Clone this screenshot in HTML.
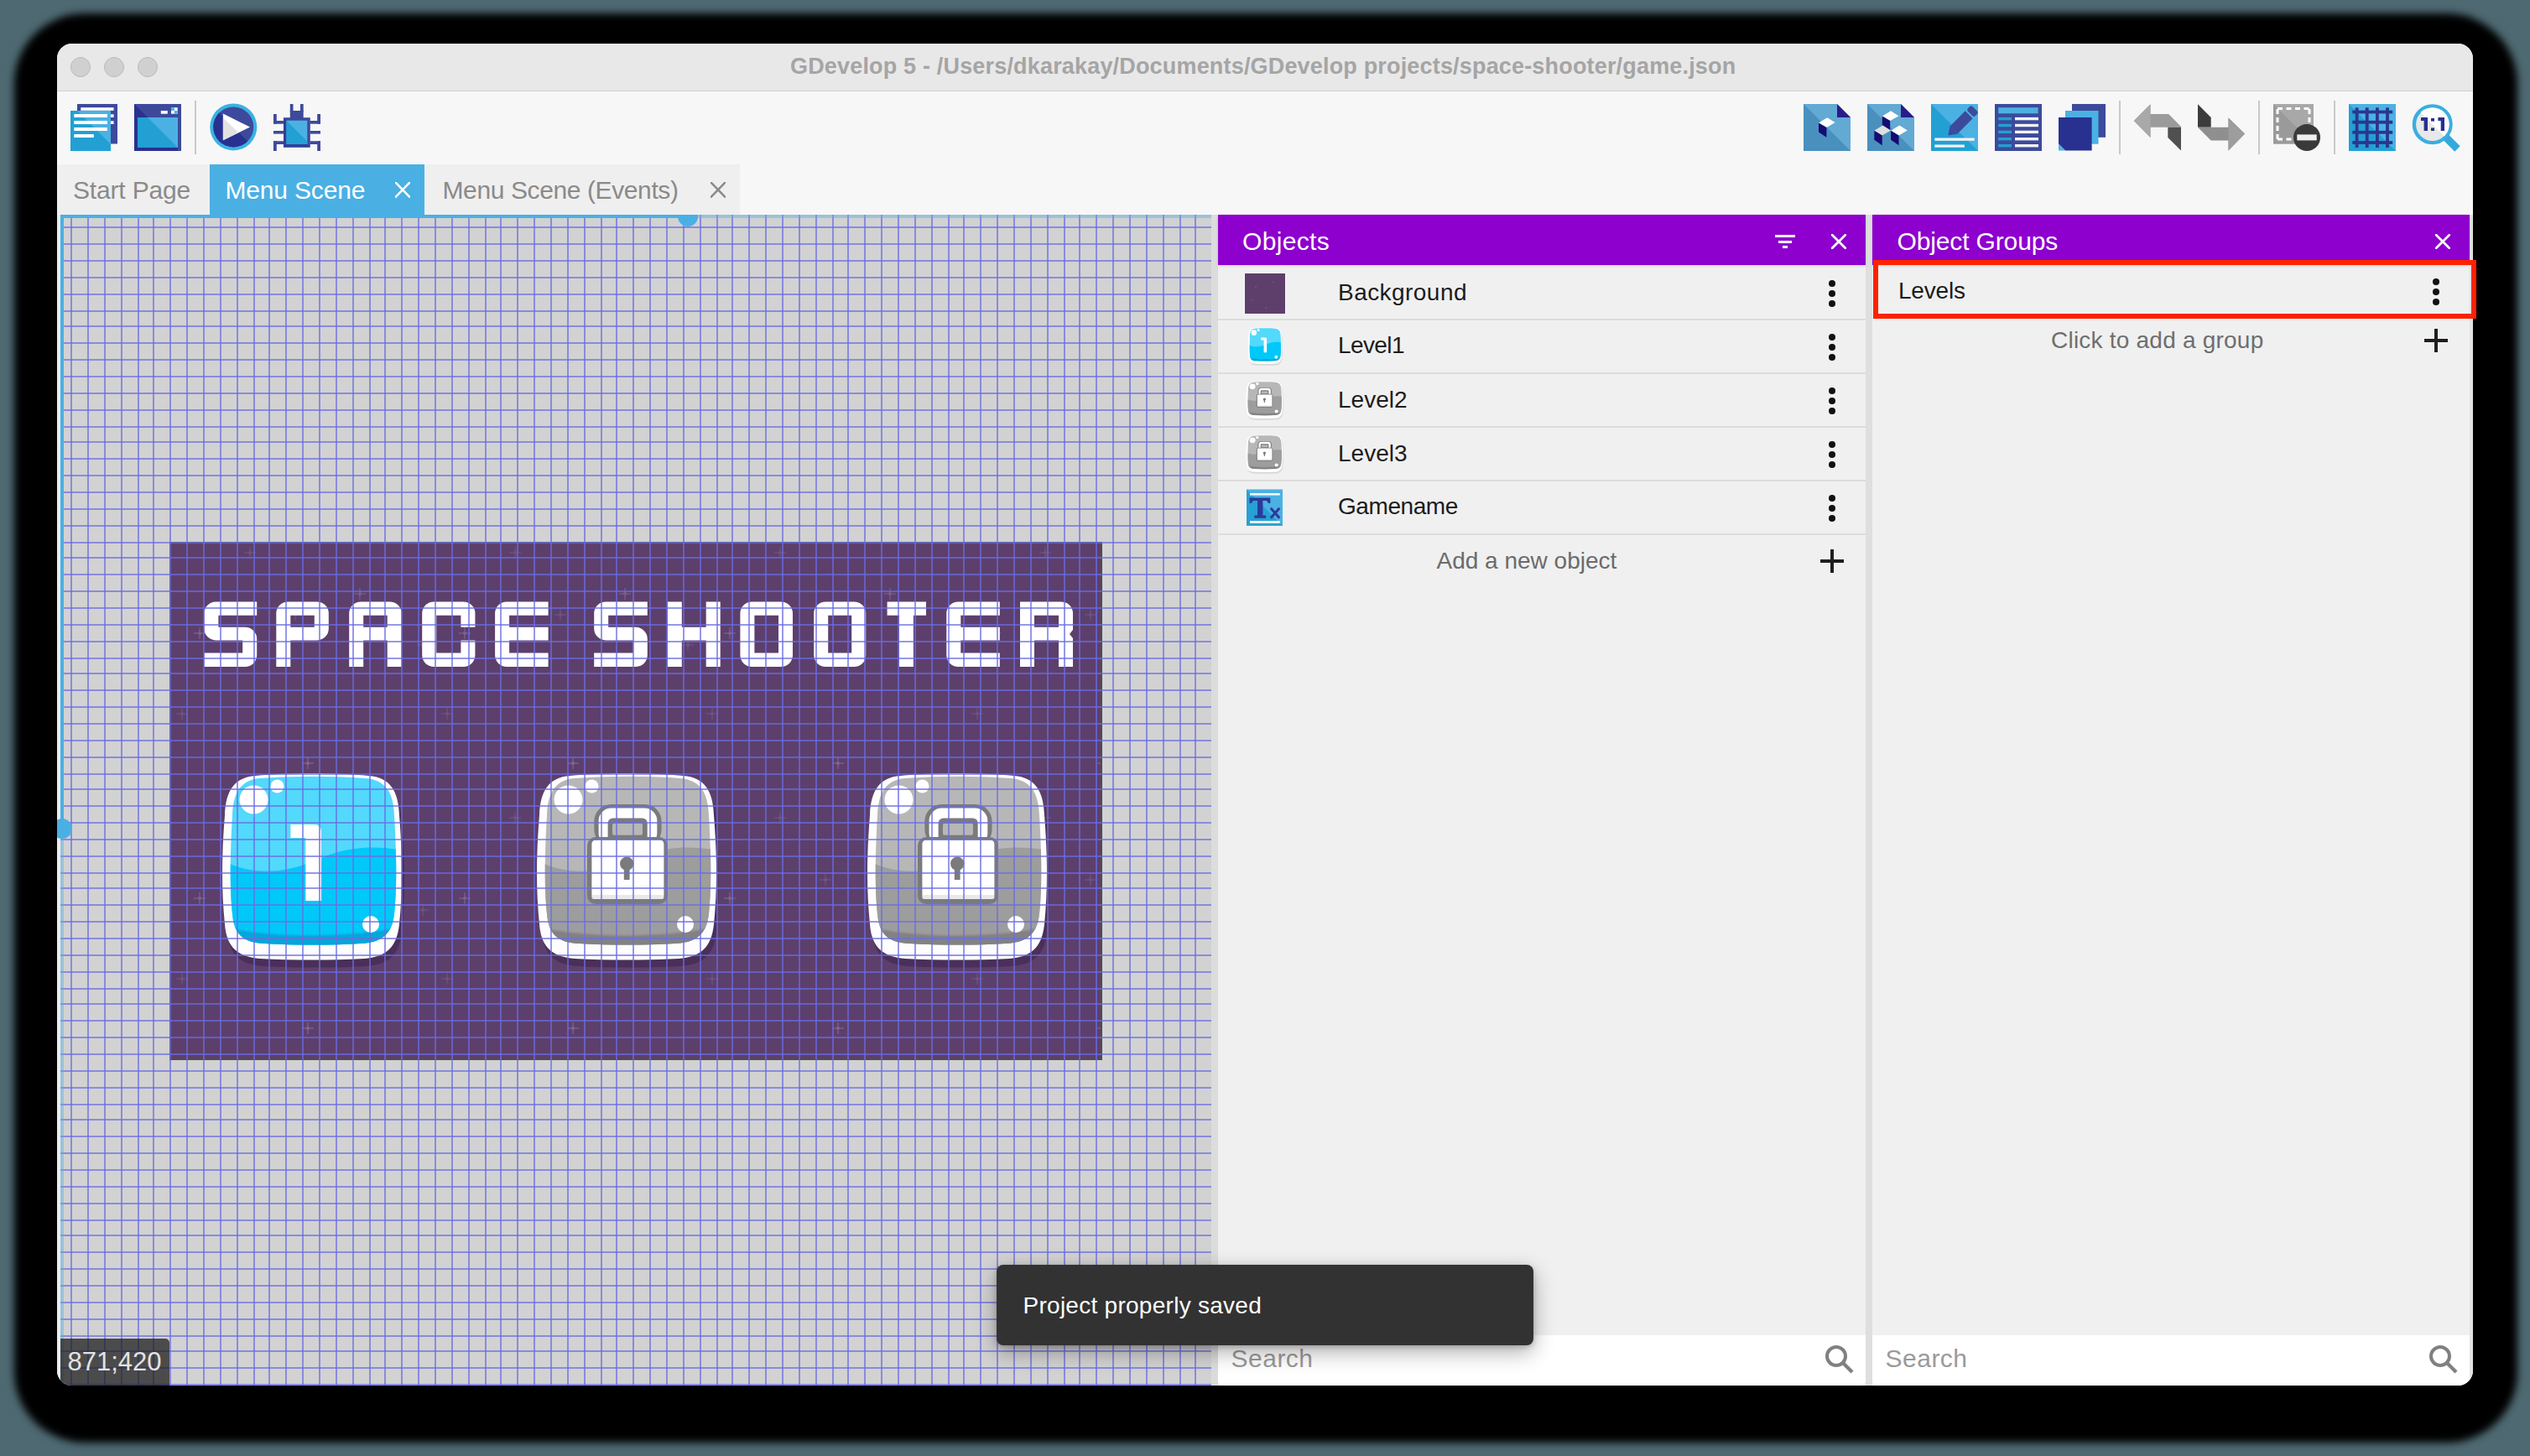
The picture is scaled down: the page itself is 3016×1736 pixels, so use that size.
<!DOCTYPE html>
<html><head><meta charset="utf-8">
<style>
*{box-sizing:border-box;margin:0;padding:0}
html,body{width:3016px;height:1736px;overflow:hidden;background:#4e6972;font-family:"Liberation Sans", sans-serif}
.abs{position:absolute}
</style></head><body>

<div class="abs" style="left:17px;top:16px;width:2984px;height:1704px;border-radius:84px;background:#000;filter:blur(5px)"></div>
<div class="abs" style="left:68px;top:52px;width:2880px;height:1600px;border-radius:18px;overflow:hidden;background:#f7f7f7">
<div class="abs" style="left:-68px;top:-52px;width:3016px;height:1736px">
<div class="abs" style="left:68px;top:52px;width:2880px;height:57px;background:#e8e8e8;border-bottom:1px solid #d0d0d0"></div>
<div class="abs" style="left:84px;top:68px;width:24px;height:24px;border-radius:50%;background:#d0d0d0;border:1px solid #b9b9b9"></div>
<div class="abs" style="left:124px;top:68px;width:24px;height:24px;border-radius:50%;background:#d0d0d0;border:1px solid #b9b9b9"></div>
<div class="abs" style="left:164px;top:68px;width:24px;height:24px;border-radius:50%;background:#d0d0d0;border:1px solid #b9b9b9"></div>
<div style="position:absolute;left:942.0px;top:65.6px;font-size:27px;line-height:27px;color:#a5a5a5;font-weight:bold;white-space:nowrap;letter-spacing:0.175px">GDevelop 5 - /Users/dkarakay/Documents/GDevelop projects/space-shooter/game.json</div>
<div class="abs" style="left:68px;top:196px;width:182px;height:60px;background:#efefef"></div>
<div class="abs" style="left:250px;top:196px;width:256px;height:60px;background:#4ab0e4"></div>
<div class="abs" style="left:506px;top:196px;width:376px;height:60px;background:#efefef"></div>
<div style="position:absolute;left:87.0px;top:212.4px;font-size:30px;line-height:30px;color:#8a8a8a;font-weight:normal;white-space:nowrap;letter-spacing:-0.17px">Start Page</div>
<div style="position:absolute;left:268.5px;top:212.4px;font-size:30px;line-height:30px;color:#ffffff;font-weight:normal;white-space:nowrap;letter-spacing:-0.17px">Menu Scene</div>
<div style="position:absolute;left:527.5px;top:212.4px;font-size:30px;line-height:30px;color:#8a8a8a;font-weight:normal;white-space:nowrap;letter-spacing:-0.39px">Menu Scene (Events)</div>
<svg class="abs" style="left:471px;top:217px" width="18" height="18.5" viewBox="0 0 18 18.5"><path d="M0 0L18 18.5M18 0L0 18.5" stroke="#ffffff" stroke-width="2.6"/></svg>
<svg class="abs" style="left:847px;top:217px" width="18" height="18.5" viewBox="0 0 18 18.5"><path d="M0 0L18 18.5M18 0L0 18.5" stroke="#8a8a8a" stroke-width="2.6"/></svg>
<div class="abs" style="left:68px;top:256px;width:4px;height:1396px;background:#ececec"></div>
<div class="abs" style="left:72px;top:256px;width:1372px;height:1396px;background:#d2d2d2;overflow:hidden">
<div class="abs" style="left:-72px;top:-256px;width:3016px;height:1736px">
<svg class="abs" style="left:0;top:0" width="3016" height="1736" viewBox="0 0 3016 1736"><rect x="203" y="647" width="1110" height="616" fill="#5d3f6c" stroke="#4e4e4e" stroke-width="2"/><clipPath id="pr"><rect x="204" y="648" width="1108" height="614"/></clipPath><g clip-path="url(#pr)"><g opacity="0.55" fill="#9a86b0"><circle cx="367" cy="910" r="2"/><rect x="360" y="909.4" width="14" height="1.2"/><rect x="366.4" y="903" width="1.2" height="14"/></g><g opacity="0.50" fill="#9a86b0"><circle cx="238" cy="755" r="2"/><rect x="231" y="754.4" width="14" height="1.2"/><rect x="237.4" y="748" width="1.2" height="14"/></g><g opacity="0.28" fill="#9a86b0"><circle cx="217" cy="851" r="2"/><rect x="210" y="850.4" width="14" height="1.2"/><rect x="216.4" y="844" width="1.2" height="14"/></g><g opacity="0.28" fill="#9a86b0"><circle cx="298" cy="659" r="2"/><rect x="291" y="658.4" width="14" height="1.2"/><rect x="297.4" y="652" width="1.2" height="14"/></g><g opacity="0.28" fill="#9a86b0"><circle cx="504" cy="769" r="2"/><rect x="497" y="768.4" width="14" height="1.2"/><rect x="503.4" y="762" width="1.2" height="14"/></g><g opacity="0.44" fill="#9a86b0"><circle cx="429" cy="708" r="2"/><rect x="422" y="707.4" width="14" height="1.2"/><rect x="428.4" y="701" width="1.2" height="14"/></g><g opacity="0.28" fill="#9a86b0"><circle cx="352" cy="733" r="2"/><rect x="345" y="732.4" width="14" height="1.2"/><rect x="351.4" y="726" width="1.2" height="14"/></g><g opacity="0.55" fill="#9a86b0"><circle cx="683" cy="910" r="2"/><rect x="676" y="909.4" width="14" height="1.2"/><rect x="682.4" y="903" width="1.2" height="14"/></g><g opacity="0.50" fill="#9a86b0"><circle cx="554" cy="755" r="2"/><rect x="547" y="754.4" width="14" height="1.2"/><rect x="553.4" y="748" width="1.2" height="14"/></g><g opacity="0.28" fill="#9a86b0"><circle cx="533" cy="851" r="2"/><rect x="526" y="850.4" width="14" height="1.2"/><rect x="532.4" y="844" width="1.2" height="14"/></g><g opacity="0.28" fill="#9a86b0"><circle cx="614" cy="659" r="2"/><rect x="607" y="658.4" width="14" height="1.2"/><rect x="613.4" y="652" width="1.2" height="14"/></g><g opacity="0.28" fill="#9a86b0"><circle cx="820" cy="769" r="2"/><rect x="813" y="768.4" width="14" height="1.2"/><rect x="819.4" y="762" width="1.2" height="14"/></g><g opacity="0.44" fill="#9a86b0"><circle cx="745" cy="708" r="2"/><rect x="738" y="707.4" width="14" height="1.2"/><rect x="744.4" y="701" width="1.2" height="14"/></g><g opacity="0.28" fill="#9a86b0"><circle cx="668" cy="733" r="2"/><rect x="661" y="732.4" width="14" height="1.2"/><rect x="667.4" y="726" width="1.2" height="14"/></g><g opacity="0.55" fill="#9a86b0"><circle cx="999" cy="910" r="2"/><rect x="992" y="909.4" width="14" height="1.2"/><rect x="998.4" y="903" width="1.2" height="14"/></g><g opacity="0.50" fill="#9a86b0"><circle cx="870" cy="755" r="2"/><rect x="863" y="754.4" width="14" height="1.2"/><rect x="869.4" y="748" width="1.2" height="14"/></g><g opacity="0.28" fill="#9a86b0"><circle cx="849" cy="851" r="2"/><rect x="842" y="850.4" width="14" height="1.2"/><rect x="848.4" y="844" width="1.2" height="14"/></g><g opacity="0.28" fill="#9a86b0"><circle cx="930" cy="659" r="2"/><rect x="923" y="658.4" width="14" height="1.2"/><rect x="929.4" y="652" width="1.2" height="14"/></g><g opacity="0.28" fill="#9a86b0"><circle cx="1136" cy="769" r="2"/><rect x="1129" y="768.4" width="14" height="1.2"/><rect x="1135.4" y="762" width="1.2" height="14"/></g><g opacity="0.44" fill="#9a86b0"><circle cx="1061" cy="708" r="2"/><rect x="1054" y="707.4" width="14" height="1.2"/><rect x="1060.4" y="701" width="1.2" height="14"/></g><g opacity="0.28" fill="#9a86b0"><circle cx="984" cy="733" r="2"/><rect x="977" y="732.4" width="14" height="1.2"/><rect x="983.4" y="726" width="1.2" height="14"/></g><g opacity="0.55" fill="#9a86b0"><circle cx="1315" cy="910" r="2"/><rect x="1308" y="909.4" width="14" height="1.2"/><rect x="1314.4" y="903" width="1.2" height="14"/></g><g opacity="0.50" fill="#9a86b0"><circle cx="1186" cy="755" r="2"/><rect x="1179" y="754.4" width="14" height="1.2"/><rect x="1185.4" y="748" width="1.2" height="14"/></g><g opacity="0.28" fill="#9a86b0"><circle cx="1165" cy="851" r="2"/><rect x="1158" y="850.4" width="14" height="1.2"/><rect x="1164.4" y="844" width="1.2" height="14"/></g><g opacity="0.28" fill="#9a86b0"><circle cx="1246" cy="659" r="2"/><rect x="1239" y="658.4" width="14" height="1.2"/><rect x="1245.4" y="652" width="1.2" height="14"/></g><g opacity="0.28" fill="#9a86b0"><circle cx="1300" cy="733" r="2"/><rect x="1293" y="732.4" width="14" height="1.2"/><rect x="1299.4" y="726" width="1.2" height="14"/></g><g opacity="0.55" fill="#9a86b0"><circle cx="367" cy="1226" r="2"/><rect x="360" y="1225.4" width="14" height="1.2"/><rect x="366.4" y="1219" width="1.2" height="14"/></g><g opacity="0.50" fill="#9a86b0"><circle cx="238" cy="1071" r="2"/><rect x="231" y="1070.4" width="14" height="1.2"/><rect x="237.4" y="1064" width="1.2" height="14"/></g><g opacity="0.28" fill="#9a86b0"><circle cx="217" cy="1167" r="2"/><rect x="210" y="1166.4" width="14" height="1.2"/><rect x="216.4" y="1160" width="1.2" height="14"/></g><g opacity="0.28" fill="#9a86b0"><circle cx="298" cy="975" r="2"/><rect x="291" y="974.4" width="14" height="1.2"/><rect x="297.4" y="968" width="1.2" height="14"/></g><g opacity="0.28" fill="#9a86b0"><circle cx="504" cy="1085" r="2"/><rect x="497" y="1084.4" width="14" height="1.2"/><rect x="503.4" y="1078" width="1.2" height="14"/></g><g opacity="0.44" fill="#9a86b0"><circle cx="429" cy="1024" r="2"/><rect x="422" y="1023.4" width="14" height="1.2"/><rect x="428.4" y="1017" width="1.2" height="14"/></g><g opacity="0.28" fill="#9a86b0"><circle cx="352" cy="1049" r="2"/><rect x="345" y="1048.4" width="14" height="1.2"/><rect x="351.4" y="1042" width="1.2" height="14"/></g><g opacity="0.55" fill="#9a86b0"><circle cx="683" cy="1226" r="2"/><rect x="676" y="1225.4" width="14" height="1.2"/><rect x="682.4" y="1219" width="1.2" height="14"/></g><g opacity="0.50" fill="#9a86b0"><circle cx="554" cy="1071" r="2"/><rect x="547" y="1070.4" width="14" height="1.2"/><rect x="553.4" y="1064" width="1.2" height="14"/></g><g opacity="0.28" fill="#9a86b0"><circle cx="533" cy="1167" r="2"/><rect x="526" y="1166.4" width="14" height="1.2"/><rect x="532.4" y="1160" width="1.2" height="14"/></g><g opacity="0.28" fill="#9a86b0"><circle cx="614" cy="975" r="2"/><rect x="607" y="974.4" width="14" height="1.2"/><rect x="613.4" y="968" width="1.2" height="14"/></g><g opacity="0.28" fill="#9a86b0"><circle cx="820" cy="1085" r="2"/><rect x="813" y="1084.4" width="14" height="1.2"/><rect x="819.4" y="1078" width="1.2" height="14"/></g><g opacity="0.44" fill="#9a86b0"><circle cx="745" cy="1024" r="2"/><rect x="738" y="1023.4" width="14" height="1.2"/><rect x="744.4" y="1017" width="1.2" height="14"/></g><g opacity="0.28" fill="#9a86b0"><circle cx="668" cy="1049" r="2"/><rect x="661" y="1048.4" width="14" height="1.2"/><rect x="667.4" y="1042" width="1.2" height="14"/></g><g opacity="0.55" fill="#9a86b0"><circle cx="999" cy="1226" r="2"/><rect x="992" y="1225.4" width="14" height="1.2"/><rect x="998.4" y="1219" width="1.2" height="14"/></g><g opacity="0.50" fill="#9a86b0"><circle cx="870" cy="1071" r="2"/><rect x="863" y="1070.4" width="14" height="1.2"/><rect x="869.4" y="1064" width="1.2" height="14"/></g><g opacity="0.28" fill="#9a86b0"><circle cx="849" cy="1167" r="2"/><rect x="842" y="1166.4" width="14" height="1.2"/><rect x="848.4" y="1160" width="1.2" height="14"/></g><g opacity="0.28" fill="#9a86b0"><circle cx="930" cy="975" r="2"/><rect x="923" y="974.4" width="14" height="1.2"/><rect x="929.4" y="968" width="1.2" height="14"/></g><g opacity="0.28" fill="#9a86b0"><circle cx="1136" cy="1085" r="2"/><rect x="1129" y="1084.4" width="14" height="1.2"/><rect x="1135.4" y="1078" width="1.2" height="14"/></g><g opacity="0.44" fill="#9a86b0"><circle cx="1061" cy="1024" r="2"/><rect x="1054" y="1023.4" width="14" height="1.2"/><rect x="1060.4" y="1017" width="1.2" height="14"/></g><g opacity="0.28" fill="#9a86b0"><circle cx="984" cy="1049" r="2"/><rect x="977" y="1048.4" width="14" height="1.2"/><rect x="983.4" y="1042" width="1.2" height="14"/></g><g opacity="0.55" fill="#9a86b0"><circle cx="1315" cy="1226" r="2"/><rect x="1308" y="1225.4" width="14" height="1.2"/><rect x="1314.4" y="1219" width="1.2" height="14"/></g><g opacity="0.50" fill="#9a86b0"><circle cx="1186" cy="1071" r="2"/><rect x="1179" y="1070.4" width="14" height="1.2"/><rect x="1185.4" y="1064" width="1.2" height="14"/></g><g opacity="0.28" fill="#9a86b0"><circle cx="1165" cy="1167" r="2"/><rect x="1158" y="1166.4" width="14" height="1.2"/><rect x="1164.4" y="1160" width="1.2" height="14"/></g><g opacity="0.28" fill="#9a86b0"><circle cx="1246" cy="975" r="2"/><rect x="1239" y="974.4" width="14" height="1.2"/><rect x="1245.4" y="968" width="1.2" height="14"/></g><g opacity="0.28" fill="#9a86b0"><circle cx="1300" cy="1049" r="2"/><rect x="1293" y="1048.4" width="14" height="1.2"/><rect x="1299.4" y="1042" width="1.2" height="14"/></g></g><path d="M257.4 717.4H306.2V733.8H260.4V747.8H292.2A14.0 14.0 0 0 1 306.2 761.8V781.0A14.0 14.0 0 0 1 292.2 795.0H243.4V778.5H289.2V763.4H257.4A14.0 14.0 0 0 1 243.4 749.4V731.4A14.0 14.0 0 0 1 257.4 717.4ZM343.3 717.4H377.8A14.0 14.0 0 0 1 391.8 731.4V749.4A14.0 14.0 0 0 1 377.8 763.4H346.3V795.0H329.3V731.4A14.0 14.0 0 0 1 343.3 717.4ZM346.3 733.8V747.8H374.8V733.8ZM430.2 717.4H464.7A14.0 14.0 0 0 1 478.7 731.4V795.0H461.7V763.4H433.2V795.0H416.2V731.4A14.0 14.0 0 0 1 430.2 717.4ZM433.2 733.8V747.8H461.7V733.8ZM517.2 717.4H552.4A14.0 14.0 0 0 1 566.4 731.4V747.8H549.4V733.8H520.2V778.5H549.4V763.4H566.4V781.0A14.0 14.0 0 0 1 552.4 795.0H517.2A14.0 14.0 0 0 1 503.2 781.0V731.4A14.0 14.0 0 0 1 517.2 717.4ZM604.1 717.4H653.6V733.8H607.1V747.8H653.6V763.4H607.1V778.5H653.6V795.0H604.1A14.0 14.0 0 0 1 590.1 781.0V731.4A14.0 14.0 0 0 1 604.1 717.4ZM722.2 717.4H771.8V733.8H725.2V747.8H757.8A14.0 14.0 0 0 1 771.8 761.8V781.0A14.0 14.0 0 0 1 757.8 795.0H708.2V778.5H754.8V763.4H722.2A14.0 14.0 0 0 1 708.2 749.4V731.4A14.0 14.0 0 0 1 722.2 717.4ZM795.8 717.4H812.8V747.8H841.7V717.4H858.7V795.0H841.7V763.4H812.8V795.0H795.8ZM896.4 717.4H931.0A14.0 14.0 0 0 1 945.0 731.4V781.0A14.0 14.0 0 0 1 931.0 795.0H896.4A14.0 14.0 0 0 1 882.4 781.0V731.4A14.0 14.0 0 0 1 896.4 717.4ZM899.4 733.8V778.5H928.0V733.8ZM984.2 717.4H1018.2A14.0 14.0 0 0 1 1032.2 731.4V781.0A14.0 14.0 0 0 1 1018.2 795.0H984.2A14.0 14.0 0 0 1 970.2 781.0V731.4A14.0 14.0 0 0 1 984.2 717.4ZM987.2 733.8V778.5H1015.2V733.8ZM1057.6 717.4H1104.0V733.8H1088.9V795.0H1071.9V733.8H1057.6ZM1142.3 717.4H1191.8V733.8H1145.3V747.8H1191.8V763.4H1145.3V778.5H1191.8V795.0H1142.3A14.0 14.0 0 0 1 1128.3 781.0V731.4A14.0 14.0 0 0 1 1142.3 717.4ZM1216.0 717.4H1265.0A14.0 14.0 0 0 1 1279.0 731.4V751.0L1275.0 756.0L1279.0 761.0V795.0H1262.0V763.4H1233.0V795.0H1216.0ZM1233.0 733.8V747.8H1262.0V733.8Z" fill="#ffffff" fill-rule="evenodd"/><g transform="translate(264 922)"><path d="M40 3C80 -1 136 -1 176 3C200 5 211 20 212 50C216 100 216 140 212 180C209 208 196 219 170 221C130 223 86 223 46 221C20 219 6 208 4 180C0 140 0 100 4 50C5 20 16 5 40 3Z" transform="translate(3 9)" fill="rgba(35,15,50,0.32)"/><path d="M40 3C80 -1 136 -1 176 3C200 5 211 20 212 50C216 100 216 140 212 180C209 208 196 219 170 221C130 223 86 223 46 221C20 219 6 208 4 180C0 140 0 100 4 50C5 20 16 5 40 3Z" fill="#fdfdfd"/><clipPath id="cl264"><path d="M45 6C90 3 130 3 172 6C195 8 205 22 206 50C209 100 209 140 206 168C203 193 190 202 165 203C130 205 90 205 52 203C27 202 15 193 13 168C10 140 10 100 13 50C14 22 24 8 45 6Z"/></clipPath><g clip-path="url(#cl264)"><rect x="0" y="0" width="216" height="222" fill="#52d9fc"/><path d="M0 103C30 120 70 122 112 104C150 86 185 86 216 92V230H0Z" fill="#00c8f8"/><path d="M0 180C40 196 176 196 216 180V230H0Z" fill="#03a6d8"/><path d="M0 172C40 188 176 188 216 172V182C176 198 40 198 0 182Z" fill="#00c8f8" opacity="0.6"/></g><circle cx="38.5" cy="31.5" r="17" fill="#fff"/><circle cx="66.5" cy="15.5" r="8" fill="#fff"/><circle cx="178" cy="180" r="10" fill="#fff"/><path d="M82.4 61H111A8 8 0 0 1 119 69V152H100.3V77H82.4Z" fill="#fff"/></g><g transform="translate(639 922)"><path d="M40 3C80 -1 136 -1 176 3C200 5 211 20 212 50C216 100 216 140 212 180C209 208 196 219 170 221C130 223 86 223 46 221C20 219 6 208 4 180C0 140 0 100 4 50C5 20 16 5 40 3Z" transform="translate(3 9)" fill="rgba(35,15,50,0.32)"/><path d="M40 3C80 -1 136 -1 176 3C200 5 211 20 212 50C216 100 216 140 212 180C209 208 196 219 170 221C130 223 86 223 46 221C20 219 6 208 4 180C0 140 0 100 4 50C5 20 16 5 40 3Z" fill="#fdfdfd"/><clipPath id="cl639"><path d="M45 6C90 3 130 3 172 6C195 8 205 22 206 50C209 100 209 140 206 168C203 193 190 202 165 203C130 205 90 205 52 203C27 202 15 193 13 168C10 140 10 100 13 50C14 22 24 8 45 6Z"/></clipPath><g clip-path="url(#cl639)"><rect x="0" y="0" width="216" height="222" fill="#b7b7b7"/><path d="M0 103C30 120 70 122 112 104C150 86 185 86 216 92V230H0Z" fill="#9d9d9d"/><path d="M0 180C40 196 176 196 216 180V230H0Z" fill="#828282"/><path d="M0 172C40 188 176 188 216 172V182C176 198 40 198 0 182Z" fill="#9d9d9d" opacity="0.6"/></g><circle cx="38.5" cy="31.5" r="17" fill="#fff"/><circle cx="66.5" cy="15.5" r="8" fill="#fff"/><circle cx="178" cy="180" r="10" fill="#fff"/><rect x="69.3" y="37.1" width="80.3" height="50" rx="20" fill="#7b7b7b"/><rect x="74.6" y="41.5" width="69.7" height="45" rx="15" fill="#fff"/><rect x="85.6" y="53.5" width="47.1" height="34" rx="6" fill="#7b7b7b"/><rect x="91" y="59.7" width="36" height="14" rx="2" fill="#b7b7b7"/><rect x="61" y="76" width="95.8" height="79.9" rx="10" fill="#7b7b7b"/><rect x="66.4" y="79.4" width="86" height="70.6" rx="5" fill="#fff"/><rect x="66.4" y="145" width="86" height="5" rx="2.5" fill="#e9e9e9"/><circle cx="108.2" cy="107.8" r="8.2" fill="#7b7b7b"/><rect x="104.8" y="108" width="6.8" height="19" fill="#7b7b7b"/></g><g transform="translate(1033 922)"><path d="M40 3C80 -1 136 -1 176 3C200 5 211 20 212 50C216 100 216 140 212 180C209 208 196 219 170 221C130 223 86 223 46 221C20 219 6 208 4 180C0 140 0 100 4 50C5 20 16 5 40 3Z" transform="translate(3 9)" fill="rgba(35,15,50,0.32)"/><path d="M40 3C80 -1 136 -1 176 3C200 5 211 20 212 50C216 100 216 140 212 180C209 208 196 219 170 221C130 223 86 223 46 221C20 219 6 208 4 180C0 140 0 100 4 50C5 20 16 5 40 3Z" fill="#fdfdfd"/><clipPath id="cl1033"><path d="M45 6C90 3 130 3 172 6C195 8 205 22 206 50C209 100 209 140 206 168C203 193 190 202 165 203C130 205 90 205 52 203C27 202 15 193 13 168C10 140 10 100 13 50C14 22 24 8 45 6Z"/></clipPath><g clip-path="url(#cl1033)"><rect x="0" y="0" width="216" height="222" fill="#b7b7b7"/><path d="M0 103C30 120 70 122 112 104C150 86 185 86 216 92V230H0Z" fill="#9d9d9d"/><path d="M0 180C40 196 176 196 216 180V230H0Z" fill="#828282"/><path d="M0 172C40 188 176 188 216 172V182C176 198 40 198 0 182Z" fill="#9d9d9d" opacity="0.6"/></g><circle cx="38.5" cy="31.5" r="17" fill="#fff"/><circle cx="66.5" cy="15.5" r="8" fill="#fff"/><circle cx="178" cy="180" r="10" fill="#fff"/><rect x="69.3" y="37.1" width="80.3" height="50" rx="20" fill="#7b7b7b"/><rect x="74.6" y="41.5" width="69.7" height="45" rx="15" fill="#fff"/><rect x="85.6" y="53.5" width="47.1" height="34" rx="6" fill="#7b7b7b"/><rect x="91" y="59.7" width="36" height="14" rx="2" fill="#b7b7b7"/><rect x="61" y="76" width="95.8" height="79.9" rx="10" fill="#7b7b7b"/><rect x="66.4" y="79.4" width="86" height="70.6" rx="5" fill="#fff"/><rect x="66.4" y="145" width="86" height="5" rx="2.5" fill="#e9e9e9"/><circle cx="108.2" cy="107.8" r="8.2" fill="#7b7b7b"/><rect x="104.8" y="108" width="6.8" height="19" fill="#7b7b7b"/></g></svg>
</div>
<svg class="abs" style="left:0;top:0" width="1372" height="1396"><g fill="rgba(106,108,227,0.7)"><rect x="12" y="0" width="2" height="1396"/><rect x="32" y="0" width="2" height="1396"/><rect x="52" y="0" width="2" height="1396"/><rect x="72" y="0" width="2" height="1396"/><rect x="92" y="0" width="2" height="1396"/><rect x="110" y="0" width="2" height="1396"/><rect x="130" y="0" width="2" height="1396"/><rect x="150" y="0" width="2" height="1396"/><rect x="170" y="0" width="2" height="1396"/><rect x="190" y="0" width="2" height="1396"/><rect x="210" y="0" width="2" height="1396"/><rect x="230" y="0" width="2" height="1396"/><rect x="248" y="0" width="2" height="1396"/><rect x="268" y="0" width="2" height="1396"/><rect x="288" y="0" width="2" height="1396"/><rect x="308" y="0" width="2" height="1396"/><rect x="328" y="0" width="2" height="1396"/><rect x="348" y="0" width="2" height="1396"/><rect x="368" y="0" width="2" height="1396"/><rect x="386" y="0" width="2" height="1396"/><rect x="406" y="0" width="2" height="1396"/><rect x="426" y="0" width="2" height="1396"/><rect x="446" y="0" width="2" height="1396"/><rect x="466" y="0" width="2" height="1396"/><rect x="486" y="0" width="2" height="1396"/><rect x="506" y="0" width="2" height="1396"/><rect x="524" y="0" width="2" height="1396"/><rect x="544" y="0" width="2" height="1396"/><rect x="564" y="0" width="2" height="1396"/><rect x="584" y="0" width="2" height="1396"/><rect x="604" y="0" width="2" height="1396"/><rect x="624" y="0" width="2" height="1396"/><rect x="644" y="0" width="2" height="1396"/><rect x="662" y="0" width="2" height="1396"/><rect x="682" y="0" width="2" height="1396"/><rect x="702" y="0" width="2" height="1396"/><rect x="722" y="0" width="2" height="1396"/><rect x="742" y="0" width="2" height="1396"/><rect x="762" y="0" width="2" height="1396"/><rect x="782" y="0" width="2" height="1396"/><rect x="800" y="0" width="2" height="1396"/><rect x="820" y="0" width="2" height="1396"/><rect x="840" y="0" width="2" height="1396"/><rect x="860" y="0" width="2" height="1396"/><rect x="880" y="0" width="2" height="1396"/><rect x="900" y="0" width="2" height="1396"/><rect x="920" y="0" width="2" height="1396"/><rect x="938" y="0" width="2" height="1396"/><rect x="958" y="0" width="2" height="1396"/><rect x="978" y="0" width="2" height="1396"/><rect x="998" y="0" width="2" height="1396"/><rect x="1018" y="0" width="2" height="1396"/><rect x="1038" y="0" width="2" height="1396"/><rect x="1058" y="0" width="2" height="1396"/><rect x="1076" y="0" width="2" height="1396"/><rect x="1096" y="0" width="2" height="1396"/><rect x="1116" y="0" width="2" height="1396"/><rect x="1136" y="0" width="2" height="1396"/><rect x="1156" y="0" width="2" height="1396"/><rect x="1176" y="0" width="2" height="1396"/><rect x="1196" y="0" width="2" height="1396"/><rect x="1214" y="0" width="2" height="1396"/><rect x="1234" y="0" width="2" height="1396"/><rect x="1254" y="0" width="2" height="1396"/><rect x="1274" y="0" width="2" height="1396"/><rect x="1294" y="0" width="2" height="1396"/><rect x="1314" y="0" width="2" height="1396"/><rect x="1334" y="0" width="2" height="1396"/><rect x="1352" y="0" width="2" height="1396"/><rect x="0" y="14" width="1372" height="2"/><rect x="0" y="34" width="1372" height="2"/><rect x="0" y="54" width="1372" height="2"/><rect x="0" y="74" width="1372" height="2"/><rect x="0" y="94" width="1372" height="2"/><rect x="0" y="114" width="1372" height="2"/><rect x="0" y="132" width="1372" height="2"/><rect x="0" y="152" width="1372" height="2"/><rect x="0" y="172" width="1372" height="2"/><rect x="0" y="192" width="1372" height="2"/><rect x="0" y="212" width="1372" height="2"/><rect x="0" y="232" width="1372" height="2"/><rect x="0" y="252" width="1372" height="2"/><rect x="0" y="270" width="1372" height="2"/><rect x="0" y="290" width="1372" height="2"/><rect x="0" y="310" width="1372" height="2"/><rect x="0" y="330" width="1372" height="2"/><rect x="0" y="350" width="1372" height="2"/><rect x="0" y="370" width="1372" height="2"/><rect x="0" y="390" width="1372" height="2"/><rect x="0" y="408" width="1372" height="2"/><rect x="0" y="428" width="1372" height="2"/><rect x="0" y="448" width="1372" height="2"/><rect x="0" y="468" width="1372" height="2"/><rect x="0" y="488" width="1372" height="2"/><rect x="0" y="508" width="1372" height="2"/><rect x="0" y="528" width="1372" height="2"/><rect x="0" y="546" width="1372" height="2"/><rect x="0" y="566" width="1372" height="2"/><rect x="0" y="586" width="1372" height="2"/><rect x="0" y="606" width="1372" height="2"/><rect x="0" y="626" width="1372" height="2"/><rect x="0" y="646" width="1372" height="2"/><rect x="0" y="666" width="1372" height="2"/><rect x="0" y="684" width="1372" height="2"/><rect x="0" y="704" width="1372" height="2"/><rect x="0" y="724" width="1372" height="2"/><rect x="0" y="744" width="1372" height="2"/><rect x="0" y="764" width="1372" height="2"/><rect x="0" y="784" width="1372" height="2"/><rect x="0" y="802" width="1372" height="2"/><rect x="0" y="822" width="1372" height="2"/><rect x="0" y="842" width="1372" height="2"/><rect x="0" y="862" width="1372" height="2"/><rect x="0" y="882" width="1372" height="2"/><rect x="0" y="902" width="1372" height="2"/><rect x="0" y="922" width="1372" height="2"/><rect x="0" y="940" width="1372" height="2"/><rect x="0" y="960" width="1372" height="2"/><rect x="0" y="980" width="1372" height="2"/><rect x="0" y="1000" width="1372" height="2"/><rect x="0" y="1020" width="1372" height="2"/><rect x="0" y="1040" width="1372" height="2"/><rect x="0" y="1060" width="1372" height="2"/><rect x="0" y="1078" width="1372" height="2"/><rect x="0" y="1098" width="1372" height="2"/><rect x="0" y="1118" width="1372" height="2"/><rect x="0" y="1138" width="1372" height="2"/><rect x="0" y="1158" width="1372" height="2"/><rect x="0" y="1178" width="1372" height="2"/><rect x="0" y="1198" width="1372" height="2"/><rect x="0" y="1216" width="1372" height="2"/><rect x="0" y="1236" width="1372" height="2"/><rect x="0" y="1256" width="1372" height="2"/><rect x="0" y="1276" width="1372" height="2"/><rect x="0" y="1296" width="1372" height="2"/><rect x="0" y="1316" width="1372" height="2"/><rect x="0" y="1336" width="1372" height="2"/><rect x="0" y="1354" width="1372" height="2"/><rect x="0" y="1374" width="1372" height="2"/><rect x="0" y="1394" width="1372" height="2"/></g></svg>
</div>
<div class="abs" style="left:72px;top:256px;width:1372px;height:4px;background:rgba(90,175,225,0.45)"></div>
<div class="abs" style="left:72px;top:260px;width:4px;height:1392px;background:rgba(90,175,225,0.45)"></div>
<div class="abs" style="left:72px;top:256px;width:760px;height:4px;background:#4ab0e4"></div>
<div class="abs" style="left:72px;top:256px;width:4px;height:732px;background:#4ab0e4"></div>
<div class="abs" style="left:808px;top:256px;width:24px;height:14px;overflow:hidden"><div style="position:absolute;left:0;top:-10px;width:24px;height:24px;border-radius:50%;background:#4ab0e4"></div></div>
<div class="abs" style="left:62px;top:976px;width:24px;height:24px;border-radius:50%;background:#4ab0e4"></div>
<div class="abs" style="left:72px;top:1596px;width:130px;height:56px;background:rgba(29,29,29,0.74);border-top-right-radius:5px"></div>
<div style="position:absolute;left:80.5px;top:1607.8px;font-size:31px;line-height:31px;color:#e2e2e2;font-weight:normal;white-space:nowrap;">871;420</div>
<div class="abs" style="left:1444px;top:256px;width:8px;height:1396px;background:#dcdcdc"></div>
<div class="abs" style="left:2224px;top:256px;width:8px;height:1396px;background:#dfdfdf"></div>
<div class="abs" style="left:2944px;top:256px;width:4px;height:1396px;background:#e2e2e2"></div>
<div class="abs" style="left:1452px;top:256px;width:772px;height:1396px;background:#f0f0f0"></div>
<div class="abs" style="left:1452px;top:256px;width:772px;height:60px;background:#8d00cd;box-shadow:0 1px 3px rgba(0,0,0,0.14)"></div>
<div style="position:absolute;left:1481.0px;top:272.8px;font-size:30px;line-height:30px;color:#ffffff;font-weight:normal;white-space:nowrap;letter-spacing:0.33px">Objects</div>
<div class="abs" style="left:2116px;top:280px;width:24px;height:3px;background:#fff"></div>
<div class="abs" style="left:2120px;top:286.5px;width:16px;height:3px;background:#fff"></div>
<div class="abs" style="left:2125px;top:293px;width:6px;height:3px;background:#fff"></div>
<svg class="abs" style="left:2183px;top:279px" width="18" height="18" viewBox="0 0 18 18"><path d="M0 0L18 18M18 0L0 18" stroke="#ffffff" stroke-width="2.8"/></svg>
<div class="abs" style="left:1452px;top:380px;width:772px;height:2px;background:#dcdcdc"></div>
<div class="abs" style="left:1452px;top:444px;width:772px;height:2px;background:#dcdcdc"></div>
<div class="abs" style="left:1452px;top:508px;width:772px;height:2px;background:#dcdcdc"></div>
<div class="abs" style="left:1452px;top:572px;width:772px;height:2px;background:#dcdcdc"></div>
<div class="abs" style="left:1452px;top:636px;width:772px;height:2px;background:#dcdcdc"></div>
<div style="position:absolute;left:1595.0px;top:334.6px;font-size:28px;line-height:28px;color:#1c1c1c;font-weight:normal;white-space:nowrap;letter-spacing:0.45px">Background</div>
<div class="abs" style="left:2180px;top:333.5px;width:8px;height:8px;border-radius:50%;background:#111"></div>
<div class="abs" style="left:2180px;top:345.5px;width:8px;height:8px;border-radius:50%;background:#111"></div>
<div class="abs" style="left:2180px;top:357.5px;width:8px;height:8px;border-radius:50%;background:#111"></div>
<div style="position:absolute;left:1595.0px;top:398.1px;font-size:28px;line-height:28px;color:#1c1c1c;font-weight:normal;white-space:nowrap;letter-spacing:-0.6px">Level1</div>
<div class="abs" style="left:2180px;top:397.5px;width:8px;height:8px;border-radius:50%;background:#111"></div>
<div class="abs" style="left:2180px;top:409.5px;width:8px;height:8px;border-radius:50%;background:#111"></div>
<div class="abs" style="left:2180px;top:421.5px;width:8px;height:8px;border-radius:50%;background:#111"></div>
<div style="position:absolute;left:1595.0px;top:462.5px;font-size:28px;line-height:28px;color:#1c1c1c;font-weight:normal;white-space:nowrap;letter-spacing:0px">Level2</div>
<div class="abs" style="left:2180px;top:461.5px;width:8px;height:8px;border-radius:50%;background:#111"></div>
<div class="abs" style="left:2180px;top:473.5px;width:8px;height:8px;border-radius:50%;background:#111"></div>
<div class="abs" style="left:2180px;top:485.5px;width:8px;height:8px;border-radius:50%;background:#111"></div>
<div style="position:absolute;left:1595.0px;top:526.5px;font-size:28px;line-height:28px;color:#1c1c1c;font-weight:normal;white-space:nowrap;letter-spacing:0px">Level3</div>
<div class="abs" style="left:2180px;top:525.5px;width:8px;height:8px;border-radius:50%;background:#111"></div>
<div class="abs" style="left:2180px;top:537.5px;width:8px;height:8px;border-radius:50%;background:#111"></div>
<div class="abs" style="left:2180px;top:549.5px;width:8px;height:8px;border-radius:50%;background:#111"></div>
<div style="position:absolute;left:1595.0px;top:590.3px;font-size:28px;line-height:28px;color:#1c1c1c;font-weight:normal;white-space:nowrap;letter-spacing:-0.43px">Gamename</div>
<div class="abs" style="left:2180px;top:589.5px;width:8px;height:8px;border-radius:50%;background:#111"></div>
<div class="abs" style="left:2180px;top:601.5px;width:8px;height:8px;border-radius:50%;background:#111"></div>
<div class="abs" style="left:2180px;top:613.5px;width:8px;height:8px;border-radius:50%;background:#111"></div>
<div style="position:absolute;left:1712.5px;top:654.7px;font-size:28px;line-height:28px;color:#6b6b6b;font-weight:normal;white-space:nowrap;">Add a new object</div>
<div class="abs" style="left:2170px;top:666.5px;width:28px;height:4px;background:#1e1e1e"></div>
<div class="abs" style="left:2182px;top:654.5px;width:4px;height:28px;background:#1e1e1e"></div>
<svg class="abs" style="left:0;top:0" width="3016" height="1736" viewBox="0 0 3016 1736"><rect x="1483.5" y="325.5" width="49" height="49" fill="#fff"/><rect x="1484" y="326" width="48" height="48" fill="#5e3f6c"/><circle cx="1497" cy="342" r="0.8" fill="#7a6890"/><circle cx="1518" cy="336" r="0.8" fill="#7a6890"/><circle cx="1509" cy="367" r="0.8" fill="#7a6890"/><circle cx="1492" cy="358" r="0.8" fill="#7a6890"/><g transform="translate(1487.5 390.5) scale(0.19 0.196)"><g transform="translate(0 0)"><path d="M40 3C80 -1 136 -1 176 3C200 5 211 20 212 50C216 100 216 140 212 180C209 208 196 219 170 221C130 223 86 223 46 221C20 219 6 208 4 180C0 140 0 100 4 50C5 20 16 5 40 3Z" transform="translate(3 9)" fill="rgba(0,0,0,0.10)"/><path d="M40 3C80 -1 136 -1 176 3C200 5 211 20 212 50C216 100 216 140 212 180C209 208 196 219 170 221C130 223 86 223 46 221C20 219 6 208 4 180C0 140 0 100 4 50C5 20 16 5 40 3Z" fill="#fdfdfd"/><clipPath id="sm1487390"><path d="M45 6C90 3 130 3 172 6C195 8 205 22 206 50C209 100 209 140 206 168C203 193 190 202 165 203C130 205 90 205 52 203C27 202 15 193 13 168C10 140 10 100 13 50C14 22 24 8 45 6Z"/></clipPath><g clip-path="url(#sm1487390)"><rect x="0" y="0" width="216" height="222" fill="#52d9fc"/><path d="M0 103C30 120 70 122 112 104C150 86 185 86 216 92V230H0Z" fill="#00c8f8"/><path d="M0 180C40 196 176 196 216 180V230H0Z" fill="#03a6d8"/><path d="M0 172C40 188 176 188 216 172V182C176 198 40 198 0 182Z" fill="#00c8f8" opacity="0.6"/></g><circle cx="38.5" cy="31.5" r="17" fill="#fff"/><circle cx="66.5" cy="15.5" r="8" fill="#fff"/><circle cx="178" cy="180" r="10" fill="#fff"/><path d="M82.4 61H111A8 8 0 0 1 119 69V152H100.3V77H82.4Z" fill="#fff"/></g></g><g transform="translate(1485.2 454.5) scale(0.205 0.2)"><g transform="translate(0 0)"><path d="M40 3C80 -1 136 -1 176 3C200 5 211 20 212 50C216 100 216 140 212 180C209 208 196 219 170 221C130 223 86 223 46 221C20 219 6 208 4 180C0 140 0 100 4 50C5 20 16 5 40 3Z" transform="translate(3 9)" fill="rgba(0,0,0,0.10)"/><path d="M40 3C80 -1 136 -1 176 3C200 5 211 20 212 50C216 100 216 140 212 180C209 208 196 219 170 221C130 223 86 223 46 221C20 219 6 208 4 180C0 140 0 100 4 50C5 20 16 5 40 3Z" fill="#fdfdfd"/><clipPath id="sm1485454"><path d="M45 6C90 3 130 3 172 6C195 8 205 22 206 50C209 100 209 140 206 168C203 193 190 202 165 203C130 205 90 205 52 203C27 202 15 193 13 168C10 140 10 100 13 50C14 22 24 8 45 6Z"/></clipPath><g clip-path="url(#sm1485454)"><rect x="0" y="0" width="216" height="222" fill="#b7b7b7"/><path d="M0 103C30 120 70 122 112 104C150 86 185 86 216 92V230H0Z" fill="#9d9d9d"/><path d="M0 180C40 196 176 196 216 180V230H0Z" fill="#828282"/><path d="M0 172C40 188 176 188 216 172V182C176 198 40 198 0 182Z" fill="#9d9d9d" opacity="0.6"/></g><circle cx="38.5" cy="31.5" r="17" fill="#fff"/><circle cx="66.5" cy="15.5" r="8" fill="#fff"/><circle cx="178" cy="180" r="10" fill="#fff"/><rect x="69.3" y="37.1" width="80.3" height="50" rx="20" fill="#7b7b7b"/><rect x="74.6" y="41.5" width="69.7" height="45" rx="15" fill="#fff"/><rect x="85.6" y="53.5" width="47.1" height="34" rx="6" fill="#7b7b7b"/><rect x="91" y="59.7" width="36" height="14" rx="2" fill="#b7b7b7"/><rect x="61" y="76" width="95.8" height="79.9" rx="10" fill="#7b7b7b"/><rect x="66.4" y="79.4" width="86" height="70.6" rx="5" fill="#fff"/><rect x="66.4" y="145" width="86" height="5" rx="2.5" fill="#e9e9e9"/><circle cx="108.2" cy="107.8" r="8.2" fill="#7b7b7b"/><rect x="104.8" y="108" width="6.8" height="19" fill="#7b7b7b"/></g></g><g transform="translate(1485.2 518.5) scale(0.205 0.2)"><g transform="translate(0 0)"><path d="M40 3C80 -1 136 -1 176 3C200 5 211 20 212 50C216 100 216 140 212 180C209 208 196 219 170 221C130 223 86 223 46 221C20 219 6 208 4 180C0 140 0 100 4 50C5 20 16 5 40 3Z" transform="translate(3 9)" fill="rgba(0,0,0,0.10)"/><path d="M40 3C80 -1 136 -1 176 3C200 5 211 20 212 50C216 100 216 140 212 180C209 208 196 219 170 221C130 223 86 223 46 221C20 219 6 208 4 180C0 140 0 100 4 50C5 20 16 5 40 3Z" fill="#fdfdfd"/><clipPath id="sm1485518"><path d="M45 6C90 3 130 3 172 6C195 8 205 22 206 50C209 100 209 140 206 168C203 193 190 202 165 203C130 205 90 205 52 203C27 202 15 193 13 168C10 140 10 100 13 50C14 22 24 8 45 6Z"/></clipPath><g clip-path="url(#sm1485518)"><rect x="0" y="0" width="216" height="222" fill="#b7b7b7"/><path d="M0 103C30 120 70 122 112 104C150 86 185 86 216 92V230H0Z" fill="#9d9d9d"/><path d="M0 180C40 196 176 196 216 180V230H0Z" fill="#828282"/><path d="M0 172C40 188 176 188 216 172V182C176 198 40 198 0 182Z" fill="#9d9d9d" opacity="0.6"/></g><circle cx="38.5" cy="31.5" r="17" fill="#fff"/><circle cx="66.5" cy="15.5" r="8" fill="#fff"/><circle cx="178" cy="180" r="10" fill="#fff"/><rect x="69.3" y="37.1" width="80.3" height="50" rx="20" fill="#7b7b7b"/><rect x="74.6" y="41.5" width="69.7" height="45" rx="15" fill="#fff"/><rect x="85.6" y="53.5" width="47.1" height="34" rx="6" fill="#7b7b7b"/><rect x="91" y="59.7" width="36" height="14" rx="2" fill="#b7b7b7"/><rect x="61" y="76" width="95.8" height="79.9" rx="10" fill="#7b7b7b"/><rect x="66.4" y="79.4" width="86" height="70.6" rx="5" fill="#fff"/><rect x="66.4" y="145" width="86" height="5" rx="2.5" fill="#e9e9e9"/><circle cx="108.2" cy="107.8" r="8.2" fill="#7b7b7b"/><rect x="104.8" y="108" width="6.8" height="19" fill="#7b7b7b"/></g></g><rect x="1486" y="583.5" width="43" height="43.2" fill="#4bb1e3"/><path d="M1486 583.5L1529 626.7H1486Z" fill="#27a1d5"/><rect x="1490" y="588" width="35.8" height="2.6" fill="#f0f6fa"/><rect x="1490" y="621" width="35.8" height="3" fill="#e8eef2"/><path d="M1489.5 593.6H1514.3V600H1512L1510 597H1505.4V614.5H1509.2V617.8H1495.3V614.5H1499V597H1494L1491.8 600H1489.5Z" fill="#2c3a9a"/><path d="M1514.8 605.7L1525.3 617.8M1525.3 605.7L1514.8 617.8" stroke="#2c3a9a" stroke-width="3"/></svg>
<div class="abs" style="left:1452px;top:1592px;width:772px;height:60px;background:#fff;border-radius:0 0 6px 6px"></div>
<div style="position:absolute;left:1467.5px;top:1604.6px;font-size:30px;line-height:30px;color:#9a9a9a;font-weight:normal;white-space:nowrap;letter-spacing:0.5px">Search</div>
<svg class="abs" style="left:2173px;top:1601px" width="40" height="44" viewBox="0 0 40 44"><circle cx="16" cy="16" r="11" fill="none" stroke="#808080" stroke-width="4"/><path d="M24 24L35 35" stroke="#808080" stroke-width="4.2"/></svg>
<div class="abs" style="left:2232px;top:1592px;width:712px;height:60px;background:#fff;border-radius:0 0 6px 6px"></div>
<div style="position:absolute;left:2247.5px;top:1604.6px;font-size:30px;line-height:30px;color:#9a9a9a;font-weight:normal;white-space:nowrap;letter-spacing:0.5px">Search</div>
<svg class="abs" style="left:2893px;top:1601px" width="40" height="44" viewBox="0 0 40 44"><circle cx="16" cy="16" r="11" fill="none" stroke="#808080" stroke-width="4"/><path d="M24 24L35 35" stroke="#808080" stroke-width="4.2"/></svg>
<div class="abs" style="left:2232px;top:256px;width:712px;height:1336px;background:#f0f0f0"></div>
<div class="abs" style="left:2232px;top:256px;width:712px;height:60px;background:#8d00cd;box-shadow:0 1px 3px rgba(0,0,0,0.14)"></div>
<div style="position:absolute;left:2261.5px;top:272.8px;font-size:30px;line-height:30px;color:#ffffff;font-weight:normal;white-space:nowrap;letter-spacing:-0.14px">Object Groups</div>
<svg class="abs" style="left:2903px;top:279px" width="18" height="18" viewBox="0 0 18 18"><path d="M0 0L18 18M18 0L0 18" stroke="#ffffff" stroke-width="2.8"/></svg>
<div style="position:absolute;left:2263.0px;top:332.5px;font-size:28px;line-height:28px;color:#1c1c1c;font-weight:normal;white-space:nowrap;letter-spacing:-0.2px">Levels</div>
<div class="abs" style="left:2900px;top:332px;width:8px;height:8px;border-radius:50%;background:#111"></div>
<div class="abs" style="left:2900px;top:344px;width:8px;height:8px;border-radius:50%;background:#111"></div>
<div class="abs" style="left:2900px;top:356px;width:8px;height:8px;border-radius:50%;background:#111"></div>
<div style="position:absolute;left:2445.0px;top:391.9px;font-size:28px;line-height:28px;color:#6e6e6e;font-weight:normal;white-space:nowrap;letter-spacing:0.22px">Click to add a group</div>
<div class="abs" style="left:2890px;top:404px;width:28px;height:4px;background:#1e1e1e"></div>
<div class="abs" style="left:2902px;top:392px;width:4px;height:28px;background:#1e1e1e"></div>
<div class="abs" style="left:2233px;top:310px;width:719px;height:70px;border:6px solid #ff2200"></div>
</div>
</div>
<div class="abs" style="left:2946px;top:310px;width:6px;height:70px;background:#ff2200"></div>
<div class="abs" style="left:1188px;top:1508px;width:640px;height:95.5px;background:#323232;border-radius:8px;box-shadow:0 8px 26px rgba(0,0,0,0.32),0 2px 6px rgba(0,0,0,0.2)"></div>
<div style="position:absolute;left:1219.5px;top:1542.9px;font-size:28px;line-height:28px;color:#ffffff;font-weight:normal;white-space:nowrap;letter-spacing:0.27px">Project properly saved</div>
<svg class="abs" style="left:0;top:0" width="3016" height="200" viewBox="0 0 3016 200"><rect x="92" y="124" width="48" height="47.5" fill="#3d4a9c"/><rect x="96.3" y="128.2" width="39.3" height="3.6" fill="#fff"/><rect x="131" y="136.3" width="4.6" height="3.6" fill="#fff"/><rect x="131" y="144.3" width="4.6" height="3.6" fill="#fff"/><rect x="84" y="132" width="48" height="48" fill="#4bb1e3"/><path d="M84 132H92L132 172V180H84Z" fill="#22a0d4"/><rect x="88.3" y="136" width="39.6" height="4" fill="#fff"/><rect x="88.3" y="144" width="39.6" height="4" fill="#fff"/><rect x="88.3" y="152" width="39.6" height="4" fill="#fff"/><rect x="88.3" y="160" width="23.5" height="4" fill="#fff"/><rect x="160" y="124" width="56" height="56" fill="#3d4a9c"/><path d="M160 124L176 140H164V176H212V180H160Z" fill="#283190"/><rect x="164" y="140" width="48" height="36" fill="#4bb1e3"/><path d="M164 140H176L212 176H164Z" fill="#22a0d4"/><rect x="191.8" y="132" width="8" height="3.7" fill="#fff"/><rect x="204" y="128.2" width="7.7" height="7.5" fill="#fff"/><rect x="204" y="128.2" width="3.85" height="3.75" fill="#4bb1e3"/><rect x="207.85" y="131.95" width="3.85" height="3.75" fill="#4bb1e3"/><rect x="232" y="120" width="2" height="64" fill="#c9c9c9"/><rect x="2526" y="120" width="2" height="64" fill="#c9c9c9"/><rect x="2692" y="120" width="2" height="64" fill="#c9c9c9"/><rect x="2782" y="120" width="2" height="64" fill="#c9c9c9"/><circle cx="278.3" cy="151.4" r="28" fill="#38b3e3"/><circle cx="278.3" cy="151.4" r="24" fill="#3d4a9c"/><path d="M261.3 134.4A24 24 0 0 0 295.3 168.4Z" fill="#283190"/><path d="M265.9 135.6L298 151.5L265.9 167.3Z" fill="#fff"/><path d="M265.9 140.5L284.4 158.2L265.9 167.3Z" fill="#e2e2e2"/><rect x="338" y="140.2" width="31.8" height="35.5" fill="#3d4a9c"/><rect x="345.8" y="132" width="15.9" height="9" fill="#3d4a9c"/><rect x="345.8" y="124" width="3.7" height="9" fill="#3d4a9c"/><rect x="358" y="124" width="3.7" height="9" fill="#3d4a9c"/><rect x="326" y="136" width="3.8" height="11.7" fill="#3d4a9c"/><rect x="326" y="144" width="12.5" height="3.7" fill="#3d4a9c"/><rect x="326" y="156" width="12.5" height="3.6" fill="#3d4a9c"/><rect x="326" y="168.2" width="12.5" height="3.8" fill="#3d4a9c"/><rect x="326" y="168.2" width="3.8" height="11.8" fill="#3d4a9c"/><rect x="378.2" y="136" width="3.8" height="11.7" fill="#3d4a9c"/><rect x="369.5" y="144" width="12.5" height="3.7" fill="#3d4a9c"/><rect x="369.5" y="156" width="12.5" height="3.6" fill="#3d4a9c"/><rect x="369.5" y="168.2" width="12.5" height="3.8" fill="#3d4a9c"/><rect x="378.2" y="168.2" width="3.8" height="11.8" fill="#3d4a9c"/><path d="M338 140.2V175.7H369.8L338 140.2Z" fill="#283190" opacity="0.5"/><rect x="341.5" y="143.7" width="24.8" height="28.3" fill="#4bb1e3"/><path d="M341.5 143.7L366.3 168.5V172H341.5Z" fill="#22a0d4"/><path d="M2150 124H2190L2206 140V180H2150Z" fill="#62a9d4"/><path d="M2150 124L2206 180H2150Z" fill="#4a90be"/><path d="M2190 124L2206 140H2190Z" fill="#2a1a8a"/><path d="M2168 146.4L2178.2 140.20000000000002L2187.7 146.1L2177.4 152.0Z" fill="#fff"/><path d="M2168 146.4L2177.4 152.0V163.8L2168 157.4Z" fill="#140c72"/><path d="M2226 124H2266L2282 140V180H2226Z" fill="#62a9d4"/><path d="M2226 124L2282 180H2226Z" fill="#4a90be"/><path d="M2266 124L2282 140H2266Z" fill="#2a1a8a"/><path d="M2243.8 138.5L2254.0 132.3L2263.5 138.2L2253.2000000000003 144.1Z" fill="#fff"/><path d="M2243.8 138.5L2253.2000000000003 144.1V155.9L2243.8 149.5Z" fill="#140c72"/><path d="M2234.3 155.8L2244.5 149.60000000000002L2254.0 155.5L2243.7000000000003 161.4Z" fill="#dedede"/><path d="M2234.3 155.8L2243.7000000000003 161.4V173.20000000000002L2234.3 166.8Z" fill="#140c72"/><path d="M2254.1 155.8L2264.2999999999997 149.60000000000002L2273.7999999999997 155.5L2263.5 161.4Z" fill="#fff"/><path d="M2254.1 155.8L2263.5 161.4V173.20000000000002L2254.1 166.8Z" fill="#140c72"/><rect x="2302" y="124" width="56" height="56" fill="#4bb1e3"/><path d="M2302 124L2358 180H2302Z" fill="#22a0d4"/><g transform="translate(2338 146) rotate(-45)"><rect x="-13" y="-6.3" width="26" height="12.6" fill="#3d4a9c"/><rect x="15" y="-6.3" width="8" height="12.6" rx="2.5" fill="#3d4a9c"/><path d="M-13 -6.3L-22 0L-13 6.3Z" fill="#3d4a9c"/></g><rect x="2306.3" y="164.5" width="47.4" height="3.3" fill="#f2f2f2"/><rect x="2306.3" y="172.5" width="35.6" height="3.2" fill="#f2f2f2"/><rect x="2378" y="124" width="56" height="56" fill="#3d4a9c"/><rect x="2382.2" y="128.2" width="47.4" height="7.1" fill="#4bb1e3"/><rect x="2382.2" y="139.9" width="15.8" height="3.4" fill="#22a0d4"/><rect x="2402" y="139.9" width="28" height="3.4" fill="#f4f4f4"/><rect x="2382.2" y="147.8" width="15.8" height="3.4" fill="#22a0d4"/><rect x="2402" y="147.8" width="28" height="3.4" fill="#f4f4f4"/><rect x="2382.2" y="155.70000000000002" width="15.8" height="3.4" fill="#22a0d4"/><rect x="2402" y="155.70000000000002" width="28" height="3.4" fill="#f4f4f4"/><rect x="2382.2" y="164.0" width="15.8" height="3.4" fill="#22a0d4"/><rect x="2402" y="164.0" width="28" height="3.4" fill="#f4f4f4"/><rect x="2382.2" y="172.0" width="15.8" height="3.4" fill="#22a0d4"/><rect x="2402" y="172.0" width="28" height="3.4" fill="#f4f4f4"/><rect x="2470" y="124" width="40" height="39.8" fill="#3d4a9c"/><rect x="2462" y="132" width="39.5" height="39.7" fill="#4bb1e3"/><path d="M2454 140H2493.6V179.6H2462L2454 171.6Z" fill="#283190"/><path d="M2454 171.6L2462 179.6H2454Z" fill="#4bb1e3"/><path d="M2543.8 143.9L2563.5 124.3V136H2585.2L2600 150.9V151.7H2563.5V163.9Z" fill="#9b9b9b"/><path d="M2543.8 143.9L2563.5 124.3V163.9Z" fill="#a9a9a9"/><path d="M2584.3 151.7H2600V179.6L2584.3 163.9Z" fill="#505050"/><path d="M2620 124.3L2635.7 140V151.7H2620Z" fill="#3c3c3c"/><path d="M2620 151.7H2656.5V140.4L2676 159.6L2656.5 179.6V167.4H2635.7Z" fill="#8f8f8f"/><path d="M2656.5 140.4L2676 159.6L2656.5 179.6Z" fill="#9d9d9d"/><rect x="2710" y="124.3" width="48" height="47.4" fill="#9a9a9a"/><path d="M2710 124.3H2758V171.7Z" fill="#a8a8a8"/><rect x="2715.0" y="128" width="6" height="3" fill="#fff"/><rect x="2715.0" y="164.5" width="6" height="3" fill="#fff"/><rect x="2725.5" y="128" width="6" height="3" fill="#fff"/><rect x="2725.5" y="164.5" width="6" height="3" fill="#fff"/><rect x="2736.0" y="128" width="6" height="3" fill="#fff"/><rect x="2736.0" y="164.5" width="6" height="3" fill="#fff"/><rect x="2746.5" y="128" width="6" height="3" fill="#fff"/><rect x="2746.5" y="164.5" width="6" height="3" fill="#fff"/><rect x="2713.5" y="130" width="3" height="6" fill="#fff"/><rect x="2751.5" y="130" width="3" height="6" fill="#fff"/><rect x="2713.5" y="140" width="3" height="6" fill="#fff"/><rect x="2751.5" y="140" width="3" height="6" fill="#fff"/><rect x="2713.5" y="150" width="3" height="6" fill="#fff"/><rect x="2751.5" y="150" width="3" height="6" fill="#fff"/><rect x="2713.5" y="160" width="3" height="6" fill="#fff"/><rect x="2751.5" y="160" width="3" height="6" fill="#fff"/><circle cx="2750" cy="163.9" r="16" fill="#3a3a3a"/><rect x="2738.3" y="160.4" width="23.4" height="7" fill="#efefef"/><rect x="2800" y="124" width="56" height="56" fill="#4bb1e3"/><path d="M2800 124L2856 180H2800Z" fill="#22a0d4"/><rect x="2807.7" y="128.3" width="3.8" height="47.7" fill="#2c3590"/><rect x="2819.7999999999997" y="128.3" width="3.8" height="47.7" fill="#2c3590"/><rect x="2832.0" y="128.3" width="3.8" height="47.7" fill="#2c3590"/><rect x="2844.1" y="128.3" width="3.8" height="47.7" fill="#2c3590"/><rect x="2804.3" y="131.6" width="47.9" height="3.8" fill="#2c3590"/><rect x="2804.3" y="143.79999999999998" width="47.9" height="3.8" fill="#2c3590"/><rect x="2804.3" y="155.9" width="47.9" height="3.8" fill="#2c3590"/><rect x="2804.3" y="168.1" width="47.9" height="3.8" fill="#2c3590"/><path d="M2915 163L2929.5 177.5" stroke="#36a9dc" stroke-width="9"/><circle cx="2899.7" cy="148.3" r="21.8" fill="#e8e8e8" stroke="#3aaee0" stroke-width="4.4"/><path d="M2885.5 134.1L2913.9 162.5A19.6 19.6 0 0 0 2885.5 134.1Z" fill="#ffffff"/><g fill="#28308e"><path d="M2886 140H2894V156H2889.6V144H2886Z"/><rect x="2898" y="141" width="4" height="3.6"/><rect x="2898" y="152.4" width="4" height="3.6"/><path d="M2906.4 140H2914V156H2909.7V144H2906.4Z"/></g></svg>
</body></html>
